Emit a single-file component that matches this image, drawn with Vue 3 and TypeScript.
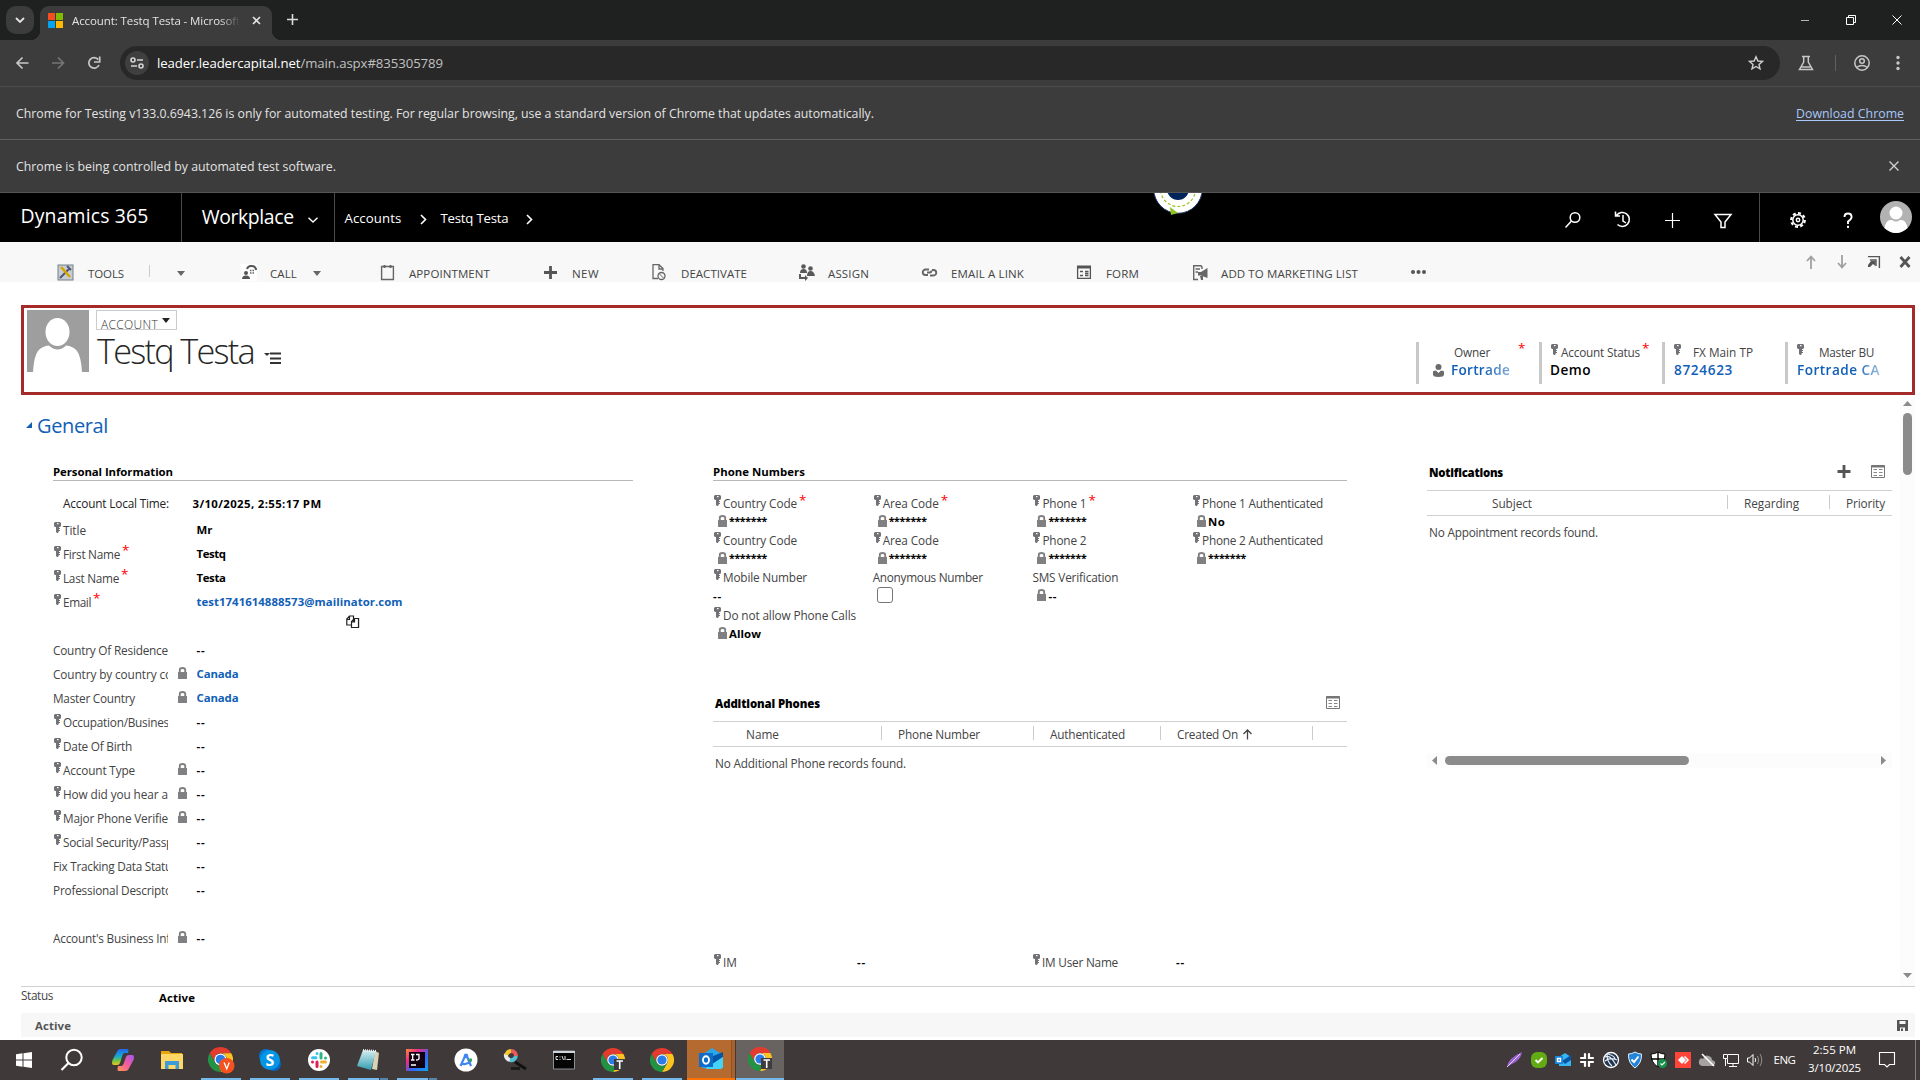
<script setup lang="ts">
interface Field { label: string; w: number; key?: boolean; req?: boolean; lock?: boolean; value?: string; vw?: number; link?: boolean }

// Spreads the letters so that a label takes the given width in pixels.
const vFit = (el: HTMLElement, binding: { value?: number }) => {
  if (!binding.value) return
  el.style.letterSpacing = '0px'
  const natural = el.getBoundingClientRect().width
  const count = (el.textContent ?? '').trim().length
  if (count) el.style.letterSpacing = (binding.value - natural) / count + 'px'
}

const fields: Field[] = [
  { label: 'Title', w: 23, key: true, value: 'Mr', vw: 16 },
  { label: 'First Name', w: 57, key: true, req: true, value: 'Testq', vw: 29 },
  { label: 'Last Name', w: 56, key: true, req: true, value: 'Testa', vw: 29 },
  { label: 'Email', w: 28, key: true, req: true, value: 'test1741614888573@mailinator.com', vw: 206, link: true },
  { label: '', w: 0 },
  { label: 'Country Of Residence', w: 115, value: '--', vw: 9 },
  { label: 'Country by country co', w: 119, lock: true, value: 'Canada', vw: 42, link: true },
  { label: 'Master Country', w: 82, lock: true, value: 'Canada', vw: 42, link: true },
  { label: 'Occupation/Busines', w: 106, key: true, value: '--', vw: 9 },
  { label: 'Date Of Birth', w: 69, key: true, value: '--', vw: 9 },
  { label: 'Account Type', w: 72, key: true, lock: true, value: '--', vw: 9 },
  { label: 'How did you hear ab', w: 112, key: true, lock: true, value: '--', vw: 9 },
  { label: 'Major Phone Verified', w: 112, key: true, lock: true, value: '--', vw: 9 },
  { label: 'Social Security/Passp', w: 110, key: true, value: '--', vw: 9 },
  { label: 'Fix Tracking Data Statu', w: 119, value: '--', vw: 9 },
  { label: 'Professional Descripto', w: 119, value: '--', vw: 9 },
  { label: '', w: 0 },
  { label: "Account's Business Inf", w: 117, lock: true, value: '--', vw: 9 },
]

const phones: (Field & { check?: boolean; empty?: boolean })[] = [
  { label: 'Country Code', w: 74, key: true, req: true, lock: true, value: '*******', vw: 38 },
  { label: 'Area Code', w: 56, key: true, req: true, lock: true, value: '*******', vw: 38 },
  { label: 'Phone 1', w: 44, key: true, req: true, lock: true, value: '*******', vw: 38 },
  { label: 'Phone 1 Authenticated', w: 121, key: true, lock: true, value: 'No', vw: 17 },
  { label: 'Country Code', w: 74, key: true, lock: true, value: '*******', vw: 38 },
  { label: 'Area Code', w: 56, key: true, lock: true, value: '*******', vw: 38 },
  { label: 'Phone 2', w: 44, key: true, lock: true, value: '*******', vw: 38 },
  { label: 'Phone 2 Authenticated', w: 121, key: true, lock: true, value: '*******', vw: 38 },
  { label: 'Mobile Number', w: 84, key: true, value: '--', vw: 9 },
  { label: 'Anonymous Number', w: 110, check: true },
  { label: 'SMS Verification', w: 86, lock: true, value: '--', vw: 9 },
  { label: '', w: 0, empty: true },
  { label: 'Do not allow Phone Calls', w: 133, key: true, lock: true, value: 'Allow', vw: 32 },
]

const summary = [
  { label: 'Owner', w: 36, value: 'Fortrade', vw: 59, cls: 'owner', link: true, req: true },
  { label: 'Account Status', w: 79, value: 'Demo', vw: 41, cls: 'state', key: true, req: true },
  { label: 'FX Main TP', w: 60, value: '8724623', vw: 59, cls: 'fx', key: true, link: true },
  { label: 'Master BU', w: 55, value: 'Fortrade CA', vw: 83, cls: 'bu', key: true, link: true },
]
</script>

<template>
  <div class="screen">
    <svg class="defs" width="0" height="0">
      <symbol id="key" viewBox="0 0 7 11"><path d="M1 0H6L7 1V4L6 5H5V6H6V7H5V8H6V9H5L4 11H3L2 10V5H1L0 4V1Z" fill="#717275" /><rect x="3" y="1" width="1.500" height="1.200" fill="#fff" /></symbol>
      <symbol id="lock" viewBox="0 0 9 12"><path d="M1.800 5.500V2.700Q1.800 1 4.500 1T7.200 2.700V5.500" fill="none" stroke="#808083" stroke-width="1.900" /><path d="M0 5H9V12H0Z" fill="#808083" /></symbol>
      <symbol id="list" viewBox="0 0 14 13"><path d="M.5.5H13.5V12.5H.5Z" fill="none" stroke="#777" /><path d="M0 1.500H14" stroke="#777" stroke-width="2" /><path d="M2.500 4.500H6M8 4.500H11.500M2.500 7.500H6M8 7.500H11.500M2.500 10.500H6M8 10.500H11.500" stroke="#888" /></symbol>
      <symbol id="chrome" viewBox="0 0 24 24">
        <path d="M1.6 6A12 12 0 0 1 22.4 6H12A6 6 0 0 0 6.8 15Z" fill="#e33b2e" /><path d="M22.4 6A12 12 0 0 1 12 24L17.2 15A6 6 0 0 0 12 6Z" fill="#fcc31e" /><path d="M12 24A12 12 0 0 1 1.6 6L6.8 15A6 6 0 0 0 17.2 15Z" fill="#229342" /><circle cx="12" cy="12" r="5.8" fill="#fff" /><circle cx="12" cy="12" r="4.6" fill="#2a7de9" />
      </symbol>
      <symbol id="tag" viewBox="0 0 24 24"><rect x="13" y="11" width="11" height="11" fill="#3c3c3e" /><path d="M15.500 13H22M18.700 13V21" stroke="#fff" stroke-width="1.600" /></symbol>
      <linearGradient id="cop1" x1="0" y1="0" x2="0" y2="1"><stop offset="0" stop-color="#2566e8" /><stop offset=".45" stop-color="#16a8d8" /><stop offset=".7" stop-color="#64c54a" /><stop offset="1" stop-color="#f3c51c" /></linearGradient>
      <linearGradient id="cop2" x1="1" y1="0" x2="0" y2="1"><stop offset="0" stop-color="#a656ee" /><stop offset=".5" stop-color="#f25c9b" /><stop offset="1" stop-color="#ff9952" /></linearGradient>
      <linearGradient id="ij" x1="0" y1="0" x2="1" y2="1"><stop offset="0" stop-color="#fc8b3d" /><stop offset=".3" stop-color="#ef2a85" /><stop offset=".6" stop-color="#3466f0" /><stop offset="1" stop-color="#0ba4f4" /></linearGradient>
      <linearGradient id="note" x1="0" y1="0" x2="0" y2="1"><stop offset="0" stop-color="#d7eff1" /><stop offset="1" stop-color="#329db0" /></linearGradient>
    </svg>

    <!-- browser tabs -->
    <header class="tabs">
      <div class="tabsearch"><svg width="10" height="6" viewBox="0 0 10 6"><path d="M1 1L5 5L9 1" fill="none" stroke="#e3e3e3" stroke-width="1.8" /></svg></div>
      <div class="tab">
        <svg width="15" height="15" viewBox="0 0 15 15"><path d="M0 0H7V7H0Z" fill="#f35022" /><path d="M8 0H15V7H8Z" fill="#80ba01" /><path d="M0 8H7V15H0Z" fill="#02a4ef" /><path d="M8 8H15V15H8Z" fill="#ffb901" /></svg>
        <span class="tabtitle"><span v-fit="168" class="t">Account: Testq Testa - Microsoft</span></span>
        <svg width="9" height="9" viewBox="0 0 9 9"><path d="M1 1L8 8M8 1L1 8" stroke="#e3e3e3" stroke-width="1.6" /></svg>
      </div>
      <svg class="newtab" width="11" height="11" viewBox="0 0 11 11"><path d="M5.5 0V11M0 5.5H11" stroke="#dcdcdc" stroke-width="1.6" /></svg>
      <div class="winctl">
        <svg width="46" height="40"><path d="M19 20.5H27" stroke="#b5b5b5" /></svg>
        <svg width="46" height="40"><path d="M18.500 17.500H25.500V24.500H18.500ZM20.500 17V15.500H27.500V22.500H26" fill="none" stroke="#fff" /></svg>
        <svg width="46" height="40"><path d="M18.500 15.500L27.500 24.500M27.500 15.500L18.500 24.500" stroke="#fff" /></svg>
      </div>
    </header>

    <div class="toolbar">
      <svg class="nav" width="36" height="46"><path d="M28.500 23H17.500M22.500 17.500L17 23L22.500 28.500" fill="none" stroke="#c7c7c7" stroke-width="1.7" /></svg>
      <svg class="nav" width="36" height="46"><path d="M16 23H27M22 17.500L27.500 23L22 28.500" fill="none" stroke="#757575" stroke-width="1.7" /></svg>
      <svg class="nav" width="36" height="46"><path d="M27 25A5.300 5.300 0 1 1 26.300 19.600" fill="none" stroke="#c7c7c7" stroke-width="1.700" /><path d="M27.700 16.500V22H22" fill="none" stroke="#c7c7c7" stroke-width="1.700" /></svg>
      <div class="omni">
        <div class="site"><svg width="14" height="12" viewBox="0 0 14 12"><g fill="none" stroke="#d5d5d5" stroke-width="1.6"><circle cx="3" cy="3" r="2" /><circle cx="11" cy="9" r="2" /><path d="M7 3H13M1 9H7" /></g></svg></div>
        <span v-fit="286" class="t url">leader.leadercapital.net<i>/main.aspx#835305789</i></span>
        <svg class="star" width="16" height="16" viewBox="0 0 16 16"><path d="M8 1.800L9.900 6L14.400 6.400L11 9.400L12 13.800L8 11.500L4 13.800L5 9.400L1.600 6.400L6.100 6Z" fill="none" stroke="#d0d0d0" stroke-width="1.400" /></svg>
      </div>
      <svg width="140" height="46"><g fill="none" stroke="#c7c7c7" stroke-width="1.5"><path d="M22 16.500H30M23.700 17V22L19.500 29.500H32.500L28.300 22V17M21.500 27H30.500" /><path d="M55.500 15V31" stroke="#606060" stroke-width="1" /><circle cx="82" cy="23" r="7.200" /><circle cx="82" cy="21" r="2.300" /><path d="M76.500 27.500Q82 23.500 87.500 27.500" /></g><g fill="#c7c7c7"><circle cx="118" cy="17.500" r="1.700" /><circle cx="118" cy="23" r="1.700" /><circle cx="118" cy="28.500" r="1.700" /></g></svg>
    </div>
    <div class="info"><span v-fit="858" class="t">Chrome for Testing v133.0.6943.126 is only for automated testing. For regular browsing, use a standard version of Chrome that updates automatically.</span><a v-fit="108" class="t">Download Chrome</a></div>
    <div class="info second"><span v-fit="320" class="t">Chrome is being controlled by automated test software.</span><svg width="20" height="12"><path d="M5.500 1.500L14.500 10.500M14.500 1.500L5.500 10.500" stroke="#cfcfcf" stroke-width="1.400" /></svg></div>

    <!-- application navigation -->
    <nav class="crm">
      <div class="brand"><span v-fit="128" class="t">Dynamics 365</span></div>
      <div class="area"><span v-fit="92" class="t">Workplace</span><svg width="10" height="6"><path d="M.500 .700L5 5L9.500 .700" fill="none" stroke="#fff" stroke-width="1.400" /></svg></div>
      <div class="crumbs">
        <span v-fit="57" class="t">Accounts</span><svg width="7" height="11"><path d="M1 1L5.500 5.500L1 10" fill="none" stroke="#fff" stroke-width="1.600" /></svg>
        <span v-fit="68" class="t">Testq Testa</span><svg width="7" height="11"><path d="M1 1L5.500 5.500L1 10" fill="none" stroke="#fff" stroke-width="1.600" /></svg>
      </div>
      <svg class="orb" width="52" height="49"><circle cx="26" cy="-4" r="24.300" fill="#fff" stroke="#173159" /><circle cx="26" cy="-4" r="11" fill="#00245a" /><circle cx="26" cy="-4" r="17.500" fill="none" stroke="#9bc121" stroke-width="1.200" stroke-dasharray="3 2" /><path d="M18 14L26 20L19 22Z" fill="#8fc31f" /></svg>
      <div class="navicons">
        <svg width="50" height="49"><circle cx="27" cy="24.500" r="4.800" /><path d="M23.500 28L17.500 34.500" /></svg>
        <svg width="50" height="49"><path d="M18.500 22.500A7 7 0 1 1 19.500 31.500M17.500 18.500V23H22M25 22V28L28 30" /></svg>
        <svg width="50" height="49"><path d="M24.500 20V35M17 27.500H32" stroke-width="1.200" /></svg>
        <svg width="37" height="49"><path d="M17 21.500H33L27 29V34.500H23V29Z" /></svg>
      </div>
      <div class="navicons sys">
        <svg width="50" height="49"><circle cx="25" cy="27" r="6.800" stroke-dasharray="3 2.300" stroke-width="2.200" /><circle cx="25" cy="27" r="5.200" /><circle cx="25" cy="27" r="1.700" /></svg>
        <svg width="50" height="49"><path d="M21.500 24Q21.500 20.500 25 20.500T28.600 24Q28.600 26 25 28.500V31M25 32.700V35" stroke-width="1.900" /></svg>
        <svg width="50" height="49"><circle cx="23" cy="24" r="16" fill="#b2b2b2" stroke="none" /><circle cx="23" cy="20" r="6.500" fill="#fff" stroke="none" /><path d="M11.500 35Q13 26 19 27Q23 30 27 27Q33 26 34.500 35Q23 45 11.500 35Z" fill="#fff" stroke="none" /></svg>
      </div>
    </nav>

    <!-- commands -->
    <div class="cmds">
      <svg width="17" height="17"><rect x="1" y="1" width="15" height="15" fill="#c7cdd1" stroke="#72808b" /><path d="M3 14L13 4M10 2L14 6" stroke="#557" stroke-width="2" /><path d="M4 3L13 13" stroke="#d5a400" stroke-width="2.500" /></svg>
      <span v-fit="36" class="t">TOOLS</span><i class="csep"></i><i class="tri"></i>
      <svg width="17" height="17"><path d="M0 0H16V17H0Z" fill="#fff" /><path d="M6 5Q7 1.500 11 2T15 6" fill="none" stroke="#555" stroke-width="2" /><path d="M9 6.500H14M9 9H14" stroke="#666" stroke-width="1.500" stroke-dasharray="1.500 1" /><circle cx="5" cy="9" r="2" fill="#555" /><path d="M1 15Q1 11.500 5 11.500T9 15Z" fill="#555" /></svg>
      <span v-fit="27" class="t">CALL</span><i class="tri"></i>
      <svg width="17" height="17"><path d="M2.600 2.500H14.400V15.500H2.600Z" fill="none" stroke="#666" stroke-width="1.400" /><path d="M5.500 1V4M11.500 1V4" stroke="#666" stroke-width="2" /></svg>
      <span v-fit="81" class="t">APPOINTMENT</span>
      <svg width="17" height="17"><path d="M8.500 2V15M2 8.500H15" stroke="#555" stroke-width="2.800" /></svg>
      <span v-fit="27" class="t">NEW</span>
      <svg width="17" height="17"><path d="M7 14.500H2V.700H8L12 4.500V7M8 1V5H12" fill="none" stroke="#666" stroke-width="1.300" /><circle cx="10.500" cy="12" r="3.500" fill="none" stroke="#666" stroke-width="1.300" /><path d="M8 9.500L13 14.500" stroke="#666" /></svg>
      <span v-fit="66" class="t">DEACTIVATE</span>
      <svg width="17" height="17" fill="#595959"><circle cx="5.500" cy="2.500" r="2.300" /><path d="M2 9Q2 5 5.500 5T9 9Z" /><circle cx="12.500" cy="4.500" r="2.300" /><path d="M9 12Q9 7 12.500 7T17 12Z" /><path d="M3 10V13H7V11L10 14L7 17V15H1V10Z" /></svg>
      <span v-fit="41" class="t">ASSIGN</span>
      <svg width="17" height="17" fill="none" stroke="#666" stroke-width="1.900"><path d="M8 5.500H4.500A2.500 2.500 0 0 0 4.500 11H7M6 8.500H8.500Q10.500 8.500 10.500 6.500M9 11.500H12.500A2.500 2.500 0 0 0 12.500 6H11" /></svg>
      <span v-fit="73" class="t">EMAIL A LINK</span>
      <svg width="17" height="17"><path d="M1.600 2.600H14.400V14.400H1.600Z" fill="none" stroke="#555" stroke-width="1.300" /><path d="M1 3H15" stroke="#555" stroke-width="3" /><path d="M4 7.500H7M4 11.500H7M9 7.500H12.500M9 9.500H12.500M9 11.500H12.500" stroke="#555" stroke-width="1.300" /></svg>
      <span v-fit="33" class="t">FORM</span>
      <svg width="17" height="17"><path d="M6 15.500H1.700V1.700H9L10 3V5M3.500 5H8M3.500 8H6" fill="none" stroke="#666" stroke-width="1.400" /><path d="M6 8H9L15.500 4V14L9 11.500H6ZM8 12H11V16H9Z" fill="#666" /></svg>
      <span v-fit="137" class="t">ADD TO MARKETING LIST</span>
      <svg width="17" height="17" fill="#555"><circle cx="2" cy="8" r="2" /><circle cx="7.500" cy="8" r="2" /><circle cx="13" cy="8" r="2" /></svg>
      <svg class="paging" width="116" height="18" fill="none"><path d="M7 17V4M3 9L7 4.500L11 9M38 3V16M34 11L38 15.500L42 11" stroke="#a0a0a0" stroke-width="1.800" /><path d="M64 4.600H75.400V16M66 8H72V14" stroke="#555" stroke-width="1.400" /><path d="M67 9H71.500V14L69 12L66 15H64V13Z" fill="#555" /><path d="M96.500 5L105.500 15M105.500 5L96.500 15" stroke="#555" stroke-width="2.800" /></svg>
    </div>

    <!-- record header -->
    <section class="record">
      <svg class="face" width="62" height="62"><path d="M0 0H62V62H0Z" fill="#9e9e9e" /><ellipse cx="30.500" cy="22" rx="12" ry="14" fill="#fff" /><path d="M6 62Q7 46 11 41Q15 36 22 35.500Q26 39.500 30.500 39.500T39 35.500Q46 36 50 41Q54 46 55 62Z" fill="#fff" /></svg>
      <div class="who">
        <div class="entity"><span v-fit="57" class="t">ACCOUNT</span><i class="tri dark"></i></div>
        <div class="name"><span v-fit="157" class="t">Testq Testa</span><svg width="18" height="12"><path d="M0 1H6L3 4Z" fill="#333" /><path d="M6 1.500H17M6 6.500H17M6 11H17" stroke="#333" stroke-width="2" /></svg></div>
      </div>
      <div class="summary">
        <div v-for="s in summary" :key="s.label" class="sum" :class="s.cls">
          <div class="sl"><svg v-if="s.key" class="skey" width="7" height="11"><use href="#key" /></svg><span v-fit="s.w" class="t">{{ s.label }}</span><b v-if="s.req" class="req">*</b></div>
          <div class="sv" :class="{ link: s.link }"><svg v-if="s.cls === 'owner'" width="11" height="13" fill="#6b6b6b"><circle cx="5.500" cy="3" r="3" /><path d="M0 8Q0 6.500 3 6.500L5.500 9L8 6.500Q11 6.500 11 8V10.500Q11 13 5.500 13T0 10.500Z" /></svg><span v-fit="s.vw" class="t">{{ s.value }}</span></div>
        </div>
      </div>
    </section>

    <main class="body">
      <div class="content">
        <h2><svg width="6" height="6"><path d="M6 0V6H0Z" fill="#1160b7" /></svg><span v-fit="71" class="t">General</span></h2>
        <div class="cols">
          <section class="personal">
            <h3 class="ruled"><span v-fit="120" class="t">Personal Information</span></h3>
            <div class="local"><span v-fit="106" class="t">Account Local Time:</span><b v-fit="129" class="t">3/10/2025, 2:55:17 PM</b></div>
            <div v-for="(f, i) in fields" :key="i" class="frow">
              <div class="flabel"><svg v-if="f.key" class="fkey" width="7" height="11"><use href="#key" /></svg><span v-if="f.label" v-fit="f.w" class="t">{{ f.label }}</span><b v-if="f.req" class="req">*</b></div>
              <div class="flock"><svg v-if="f.lock" width="9" height="12"><use href="#lock" /></svg></div>
              <svg v-if="i === 4" class="copy" width="14" height="14" fill="#fff" stroke="#222" stroke-width="1.200"><path d="M6.500 3.500H12.500V12.500H6.500Z" /><path d="M.800 4L3.500 1H7.500V10H.800ZM1 4.500H3.500V1" /><path d="M5.500 12.500V6.500L8.500 3.500H12.500V12.500ZM5.500 7H8.500V3.500" /></svg>
              <div v-else-if="f.value" class="fval" :class="{ link: f.link }"><span v-fit="f.vw" class="t">{{ f.value }}</span></div>
            </div>
          </section>

          <section class="phonecol">
            <h3 class="ruled"><span v-fit="92" class="t">Phone Numbers</span></h3>
            <div class="phones">
              <div v-for="(p, i) in phones" :key="i" class="phone">
                <template v-if="!p.empty">
                  <div class="plabel"><svg v-if="p.key" class="pkey" width="7" height="11"><use href="#key" /></svg><span v-fit="p.w" class="t">{{ p.label }}</span><b v-if="p.req" class="req">*</b></div>
                  <div class="pval"><i v-if="p.check" class="check"></i><svg v-if="p.lock" width="9" height="12"><use href="#lock" /></svg><span v-if="p.value" v-fit="p.vw" class="t" :class="{ mask: p.value[0] === '*' }">{{ p.value }}</span></div>
                </template>
              </div>
            </div>
            <div class="gridhead"><b v-fit="105" class="t">Additional Phones</b><svg width="14" height="13"><use href="#list" /></svg></div>
            <div class="thead add"><span><i v-fit="33" class="t">Name</i></span><span><i v-fit="82" class="t">Phone Number</i></span><span><i v-fit="75" class="t">Authenticated</i></span><span><i v-fit="61" class="t">Created On</i><svg width="11" height="11"><path d="M5.500 10.500V1M1.500 5L5.500 1L9.500 5" fill="none" stroke="#444" stroke-width="1.300" /></svg></span><span></span></div>
            <p><span v-fit="191" class="t">No Additional Phone records found.</span></p>
            <div class="im"><svg width="7" height="11"><use href="#key" /></svg><span v-fit="14" class="t">IM</span><b v-fit="9" class="t">--</b><svg width="7" height="11"><use href="#key" /></svg><span v-fit="76" class="t">IM User Name</span><b v-fit="9" class="t">--</b></div>
          </section>

          <section class="notes">
            <div class="gridhead"><b v-fit="74" class="t">Notifications</b><svg class="plus" width="14" height="13"><path d="M7 0V13M.500 6.500H13.500" stroke="#555" stroke-width="2.800" /></svg><svg width="14" height="13"><use href="#list" /></svg></div>
            <div class="thead note"><span><i v-fit="40" class="t">Subject</i></span><span><i v-fit="55" class="t">Regarding</i></span><span><i v-fit="39" class="t">Priority</i></span></div>
            <p><span v-fit="169" class="t">No Appointment records found.</span></p>
            <div class="hscroll"><svg width="5" height="9"><path d="M5 0V9L0 4.500Z" fill="#8b8b8b" /></svg><i></i><svg width="5" height="9"><path d="M0 0V9L5 4.500Z" fill="#8b8b8b" /></svg></div>
          </section>
        </div>
      </div>
      <div class="vscroll"><svg width="9" height="5"><path d="M0 5H9L4.500 0Z" fill="#8b8b8b" /></svg><i></i><svg width="9" height="5"><path d="M0 0H9L4.500 5Z" fill="#8b8b8b" /></svg></div>
    </main>

    <div class="status"><span v-fit="32" class="t">Status</span><b v-fit="36" class="t">Active</b></div>
    <div class="strip"><b v-fit="36" class="t">Active</b><svg width="11" height="11"><path d="M0 0H11V11H0Z" fill="#555" /><path d="M2.500 1H8.500V4H2.500ZM3 7.500H8V11H3Z" fill="#f7f7f7" /><path d="M4 8.500H6V11H4Z" fill="#555" /></svg></div>

    <!-- taskbar -->
    <footer class="taskbar">
      <div class="cell start"><svg width="16" height="16" fill="#fff"><path d="M0 2.200L6.500 1.300V7.500H0ZM7.500 1.200L16 0V7.500H7.500ZM0 8.500H6.500V14.700L0 13.800ZM7.500 8.500H16V16L7.500 14.800Z" /></svg></div>
      <div class="cell find"><svg width="24" height="24"><circle cx="14" cy="9.500" r="7.700" fill="none" stroke="#fff" stroke-width="2" /><path d="M8.500 15L1.500 22" stroke="#fff" stroke-width="2.200" /></svg></div>
      <div class="cell"><svg width="24" height="24" viewBox="0 0 24 24"><path d="M7 2Q8 1 10 1H16Q18 1 17.500 3L17 5H14Q12 5 11.500 7L9 15Q8.500 17 6 17H3Q0 17 1.500 12Z" fill="url(#cop1)" /><path d="M17 22Q16 23 14 23H8Q6 23 6.500 21L7 18H10Q12 18 12.500 16L15 9Q15.500 7 18 7H21Q24 7 22.500 12Z" fill="url(#cop2)" /></svg></div>
      <div class="cell"><svg width="24" height="24" viewBox="0 0 24 24"><path d="M1 3H9L11 5H22V9H1Z" fill="#e7a70c" /><path d="M1 6H23V21H1Z" fill="#ffd767" /><path d="M5 13H19V21H15.500V17H8.500V21H5Z" fill="#3d9bdc" /></svg></div>
      <div class="cell run"><svg width="28" height="28" viewBox="-1 -1 27 27"><use href="#chrome" width="24" height="24" /><circle cx="18" cy="18" r="7.500" fill="#f4511e" /><path d="M15.500 15L18 21L20.500 15" fill="none" stroke="#fff" stroke-width="1.300" /></svg></div>
      <div class="cell run"><svg width="24" height="24" viewBox="0 0 24 24"><rect x="1" y="1" width="14" height="14" rx="7" fill="#0078d4" /><rect x="9" y="9" width="14" height="14" rx="7" fill="#0864c5" /><circle cx="12" cy="12" r="10" fill="#0595e5" /></svg><b>S</b></div>
      <div class="cell run"><svg width="24" height="24" viewBox="0 0 24 24"><circle cx="12" cy="12" r="11" fill="#fff" /><g fill="none" stroke-width="3" stroke-linecap="round"><path d="M5.500 9.800H9M10 5.500V5.600" stroke="#36c5f0" /><path d="M14 5.500V10M18.500 10V9.900" stroke="#2eb67d" /><path d="M14.500 14H18.500M14 18.500V18.400" stroke="#ecb22e" /><path d="M10 14V18.500M5.500 14V14.100" stroke="#e01e5a" /></g></svg></div>
      <div class="cell run multi"><svg width="24" height="24" viewBox="0 0 24 24"><path d="M19 3L23 5L21 22L16 21Z" fill="#d9d2b4" /><path d="M7 2L20 3L15 22L1 18Z" fill="url(#note)" /><path d="M7 2L20 3" stroke="#eee" stroke-width="2" stroke-dasharray="1 1" /></svg></div>
      <div class="cell run multi"><svg width="24" height="24" viewBox="0 0 24 24"><rect x="1" y="1" width="22" height="22" fill="url(#ij)" /><path d="M4 4H20V20H4Z" fill="#120010" /><path d="M6 6.500H9.500M7.700 6.500V12M6 12H9.500M11 6.500H14V10.500Q14 12 11 12M6 17H11" fill="none" stroke="#fff" stroke-width="1.300" /></svg></div>
      <div class="cell"><svg width="24" height="24" viewBox="0 0 24 24"><circle cx="12" cy="12" r="11.500" fill="#fff" /><path d="M12 6L6.500 18M12 6L17 18M7 15Q12 18 17 13" fill="none" stroke="#4285f4" stroke-width="2.200" /><circle cx="12" cy="8" r="2.300" fill="#4285f4" /><circle cx="16.500" cy="12" r="1.700" fill="#34a853" /></svg></div>
      <div class="cell"><svg width="24" height="24" viewBox="0 0 24 24"><path d="M12 14L23 21" stroke="#111" stroke-width="3" /><path d="M8 19H17V22H8Z" fill="#1b1b1b" /><g fill="none" stroke-width="4"><path d="M7 12A5 5 0 0 1 3 6" stroke="#e9e9e9" /><path d="M3.500 7A5 5 0 0 1 8 3" stroke="#f7c52e" /><path d="M8 3A5 5 0 0 1 13 8" stroke="#ed5a5c" /><path d="M13 8A5 5 0 0 1 7 12" stroke="#56bfd6" /></g></svg></div>
      <div class="cell"><svg width="24" height="24" viewBox="0 0 24 24"><path d="M1.500 3H22.500V21H1.500Z" fill="#050505" stroke="#8b9197" /><path d="M1 4H23" stroke="#cfd5da" stroke-width="2" /><path d="M6 8.500H4V11.500H6M8 8.500V9.500M8 11V12M10 8L11.500 12M13 8V12M14.500 11.500H19" fill="none" stroke="#ddd" /></svg></div>
      <div class="cell run"><svg width="24" height="24" viewBox="0 0 24 24"><use href="#chrome" width="24" height="24" /><use href="#tag" width="24" height="24" /></svg></div>
      <div class="cell run"><svg width="24" height="24"><use href="#chrome" /></svg></div>
      <div class="cell outlook"><svg width="26" height="24" viewBox="0 0 26 24"><path d="M4 8L14 1L25 8V21H4Z" fill="#28a8ea" /><path d="M8 12L25 5V10L12 19Z" fill="#0357a5" /><path d="M8 21L25 10V20L23 22H8Z" fill="#43d3f8" /><path d="M1 6H15V20H1Z" fill="#0f6cc9" /><ellipse cx="8" cy="13" rx="3" ry="3.700" fill="none" stroke="#fff" stroke-width="1.900" /></svg></div>
      <div class="cell active"><svg width="24" height="24" viewBox="0 0 24 24"><use href="#chrome" width="24" height="24" /><use href="#tag" width="24" height="24" /></svg></div>
      <div class="tray">
        <svg><path d="M4 19Q5 10 19 4Q18 12 9 16Z" fill="#9b64d0" /><path d="M4 19L17 6" stroke="#e6cfff" /></svg>
        <svg><rect x="4" y="4" width="16" height="16" rx="6" fill="#62ab13" /><path d="M8.500 12L11 14.500L15.500 10" fill="none" stroke="#fff" stroke-width="1.900" /></svg>
        <svg><path d="M8 9L14 5L20 9V18H8Z" fill="#37b6f5" /><path d="M11 13L20 7V12L14 16Z" fill="#0754a5" /><path d="M4 8H12V16H4Z" fill="#1683dc" /><path d="M6.500 10.500H9.500V13.500H6.500Z" fill="none" stroke="#fff" stroke-width="1.400" /></svg>
        <svg><path d="M10 6V10H6M14 6V10H18M10 18V14H6M14 18V14H18" fill="none" stroke="#fff" stroke-width="2.200" stroke-linecap="round" /></svg>
        <svg><circle cx="12" cy="12" r="7.500" fill="#24364f" stroke="#fff" stroke-width="1.300" /><path d="M6 9Q11 6 17 17M9 6Q16 8 16 11M6 13Q11 9 18 12M8 6Q8 14 13 18" fill="none" stroke="#e5edf7" stroke-width="1.200" /></svg>
        <svg><path d="M12 4Q15 6 18.500 6Q19 15 12 20Q5 15 5.500 6Q9 6 12 4Z" fill="#2384d8" stroke="#e4f0fa" /><path d="M8.500 11.500L11 14L15.500 8.500" fill="none" stroke="#fff" stroke-width="1.900" /></svg>
        <svg><path d="M11 4Q14 6 18 6Q18 15 11 19Q4 15 4 6Q8 6 11 4Z" fill="#fff" stroke="#000" /><path d="M11 4V18M4 11H18" stroke="#000" stroke-width="1.400" /><circle cx="15.500" cy="15.500" r="4.500" fill="#149348" /><path d="M13.500 15.500L15 17L18 14" fill="none" stroke="#fff" stroke-width="1.200" /></svg>
        <svg><path d="M4 4H20V20H4Z" fill="#ff4438" /><path d="M7 12L11 8L15 12L11 16Z" fill="#fff" /><path d="M13.500 8.500L17 12L13.500 15.500" fill="none" stroke="#fff" stroke-width="1.500" /></svg>
        <svg><path d="M7 18Q3 17 4 13T8 11Q10 6 14 8Q17 9 17 12Q21 13 20 16L18 18Z" fill="#a5a2a1" /><path d="M7 6L19 18" stroke="#fff" stroke-width="1.600" /></svg>
        <svg><path d="M9 6.500H19.500V15.500H8.500V11M14 16V18.500M10 18.500H18M4.500 6.500H8.500V10.500H4.500ZM6.500 11V18" fill="none" stroke="#fff" /></svg>
        <svg><path d="M4.500 10H6.500L10 6.500V17.500L6.500 14H4.500Z" fill="none" stroke="#fff" /><path d="M12 10Q13.500 12 12 14" fill="none" stroke="#fff" /><path d="M14.500 8Q17 12 14.500 16M17 6Q20.500 12 17 18" fill="none" stroke="#948f8e" /></svg>
      </div>
      <span v-fit="22" class="t eng">ENG</span>
      <div class="clock"><span v-fit="43" class="t">2:55 PM</span><span v-fit="53" class="t">3/10/2025</span></div>
      <svg class="bell" width="18" height="18"><path d="M1.500 1.500H16.500V13.500H11.500L9 16L6.500 13.500H1.500Z" fill="none" stroke="#fff" stroke-width="1.100" /></svg>
      <i class="edge"></i>
    </footer>
  </div>
</template>

<style>
body { margin: 0; overflow: hidden; background: #fff; }
</style>

<style scoped>
* { box-sizing: border-box; }
.screen { width: 1920px; height: 1080px; overflow: hidden; display: flex; flex-direction: column; font: 11.8px "Open Sans", "Noto Sans", sans-serif; color: #444; background: #fff; }
.defs { position: absolute; }
svg { display: block; flex: none; }
i { font-style: normal; }
.t { display: inline-block; white-space: pre; flex: none; }
.link { color: #1160b7 !important; }
.req { color: #f00; font: 400 13.5px/10px "Open Sans", sans-serif; align-self: flex-start; margin: 1px 0 0 2px; }

.tabs { height: 40px; flex: none; background: #1f2120; display: flex; }
.tabsearch { width: 28px; height: 28px; margin: 6px 6px 0; border-radius: 10px; background: #3c3c3c; display: flex; align-items: center; justify-content: center; }
.tab { width: 232px; height: 34px; margin-top: 6px; border-radius: 9px 9px 0 0; background: #3c3c3c; color: #e3e3e3; display: flex; align-items: center; padding: 0 11px 5px 8px; position: relative; }
.tab::before, .tab::after { content: ""; position: absolute; bottom: 0; width: 9px; height: 9px; }
.tab::before { left: -9px; background: radial-gradient(circle at 0 0, #1f2120 9px, #3c3c3c 9px); }
.tab::after { right: -9px; background: radial-gradient(circle at 100% 0, #1f2120 9px, #3c3c3c 9px); }
.tabtitle { margin-left: 9px; width: 168px; margin-right: 12px; overflow: hidden; font-size: 11.5px; line-height: 20px; mask-image: linear-gradient(90deg, #000 148px, transparent 168px); }
.newtab { margin: 14px 0 0 14.5px; }
.winctl { display: flex; margin-left: auto; }
.toolbar { height: 46px; flex: none; background: #3c3c3c; display: flex; }
.toolbar .nav:nth-child(3) { margin-right: 12px; }
.omni { width: 1660px; height: 34px; margin-top: 6px; border-radius: 17px; background: #282828; display: flex; align-items: center; padding: 0 16px 0 5px; }
.site { width: 24px; height: 24px; border-radius: 50%; background: #3f3f3f; display: flex; align-items: center; justify-content: center; margin-right: 8px; }
.url { color: #fff; font-size: 13.2px; }
.url i { color: #c0c0c0; }
.star { margin-left: auto; }
.info { height: 53px; flex: none; border-top: 1px solid #4b4b4b; background: #3c3c3c; color: #e3e3e3; font-size: 12.3px; display: flex; align-items: center; justify-content: space-between; padding: 0 16px; }
.info a { color: #a8c7fa; text-decoration: underline; text-underline-offset: 2px; }
.info.second { height: 54px; border-top-color: #606060; border-bottom: 1px solid #555; }

.crm { height: 49px; flex: none; background: #000; color: #fff; display: flex; }
.brand { width: 182px; border-right: 1px solid #4a4a4a; padding-left: 20.5px; font-size: 19.4px; line-height: 46px; }
.area { width: 154px; border-right: 1px solid #4a4a4a; padding-left: 20px; font-size: 19.4px; line-height: 47px; display: flex; }
.area svg { margin: 24px 0 0 14px; }
.crumbs { display: grid; grid-template-columns: 76px 20px 86px 11px; padding-left: 9px; font-size: 13.2px; line-height: 50px; justify-items: start; }
.crumbs svg { margin-top: 21px; }
.orb { margin-left: 615px; }
.navicons { display: flex; margin-left: 344px; width: 212px; border-right: 1px solid #4a4a4a; }
.navicons svg { fill: none; stroke: #fff; stroke-width: 1.5; }
.navicons.sys { margin-left: 13px; width: 147px; border: 0; }

.cmds { height: 40px; flex: none; background: #f8f8f8; display: grid; justify-items: start; padding-left: 57px; padding-top: 22px; grid-template-columns: 31px 61px 28px 64px 29px 43px 66px 30px 133px 30px 79px 30px 117px 30px 93px 30px 125px 30px 86px 29px 190px 1fr 116px; line-height: 20px; font-size: 11.5px; color: #444; overflow: hidden; }
.cmds > .paging { grid-column: 23; margin-top: -12px; }
.csep { width: 1px; height: 12px; background: #ccc; margin-top: 1px; }
.tri { width: 0; height: 0; border: 4px solid transparent; border-top: 5px solid #666; border-bottom: 0; margin: 7px 0 0 0; }
.tri.dark { border-top-color: #222; }

.record { width: 1894px; height: 90px; flex: none; margin: 23px 0 0 21px; border: 3px solid #a52a2a; display: flex; padding: 2px 0 0 3px; }
.who { margin-left: 7px; }
.entity { width: 81px; height: 20px; border: 1px solid #ccc; display: flex; padding-left: 4px; overflow: hidden; font-size: 12px; line-height: 27px; color: #333; font-weight: 300; }
.entity .tri { margin: 7px 0 0 4px; }
.name { display: flex; margin-left: 1px; font-size: 34.3px; font-weight: 300; color: #262626; line-height: 41px; }
.name svg { margin: 22px 0 0 10px; }
.summary { margin: 32px 0 0 auto; display: flex; height: 42px; padding-right: 4px; }
.sum { width: 123px; border-left: 3px solid #c8c8c8; }
.sl { display: flex; height: 20px; line-height: 21px; padding-left: 9px; }
.skey { margin-top: 2px; }
.owner .sl { padding-left: 35px; }
.owner .req { margin-left: 28px; }
.state .sl .t { margin-left: 3px; }
.fx .sl .t { margin-left: 12px; }
.bu .sl .t { margin-left: 15px; }
.sv { padding-left: 9px; font-size: 13.6px; line-height: 16px; height: 20px; color: #000; font-weight: 600; display: flex; }
.state .sv { padding-left: 8px; }
.owner .sv { padding-left: 14px; line-height: 15px; }
.owner .sv svg { margin: 2px 7px 0 0; }
.owner .sv .t { mask-image: linear-gradient(90deg, #000 50%, #0008); }
.bu .sv .t { mask-image: linear-gradient(90deg, #000 70%, #0006); }

.body { height: 591px; flex: none; display: flex; overflow: hidden; }
.content { width: 1900px; padding-top: 16px; }
h2 { margin: 0 0 22px; height: 30px; padding-left: 26px; display: flex; color: #1160b7; font-size: 20px; font-weight: 400; line-height: 30px; }
h2 svg { margin: 11px 5px 0 0; }
.cols { display: flex; padding-left: 53px; gap: 80px; }
h3 { margin: 0; font-size: 11.4px; font-weight: 700; color: #000; line-height: 18px; }
h3.ruled { height: 18px; border-bottom: 1px solid #b8b8b8; }
.personal { width: 580px; }
.local { display: grid; grid-template-columns: 129.5px 1fr; padding-left: 10px; margin-top: 10px; height: 27px; line-height: 25px; color: #222; justify-items: start; }
.local b { color: #000; font-size: 11.4px; font-weight: 700; }
.frow { display: grid; grid-template-columns: 115px 28.5px 1fr; height: 24px; line-height: 25px; }
.flabel { display: flex; overflow: hidden; }
.flabel .fkey { margin: 4px 2px 0 1px; }
.flabel .req { margin-top: 3px; }
.flock { padding: 5px 0 0 10px; }
.fval { line-height: 23px; font-size: 11.4px; font-weight: 700; color: #000; }
.copy { margin: 1px 0 0 149px; }
.phonecol { width: 634px; }
.phones { display: grid; grid-template-columns: repeat(4, 159.7px); grid-template-rows: 37px 37px 38px 37px; margin-top: 13px; height: 149px; }
.plabel { display: flex; height: 19px; line-height: 19.500px; white-space: nowrap; }
.pkey { margin: 1px 2px 0 1px; }
.plabel .req { margin-top: 1px; }
.pval { display: flex; height: 18px; line-height: 17px; color: #000; font-size: 11.4px; font-weight: 700; }
.pval .mask { font-size: 10.5px; line-height: 16px; }
.pval svg { margin: 2px 2px 0 5px; }
.check { width: 16px; height: 16px; border: 1px solid #767676; border-radius: 3px; margin: 0 0 0 4px; }
.gridhead { display: flex; height: 27px; line-height: 19px; padding: 0 7px 0 2px; color: #000; font-size: 11.4px; font-weight: 700; justify-content: space-between; }
.phonecol .gridhead { margin-top: 51px; }
.gridhead svg { margin-top: 2px; }
.thead { display: grid; height: 26px; border: 1px solid #d0d0d0; border-width: 1px 0; line-height: 25px; }
.thead span { display: flex; padding-left: 17px; background: linear-gradient(#ccc, #ccc) 0 4px / 1px 14px no-repeat; }
.thead span:first-child { background: none; padding-left: 33px; }
.thead.add { grid-template-columns: 168px 152px 127px 152px 1fr; }
.thead.add svg { margin: 7px 0 0 4px; }
.thead.note { grid-template-columns: 300px 102px 1fr; }
.thead.note span:first-child { padding-left: 65px; }
p { margin: 4px 0 0 2px; line-height: 25px; height: 25px; }
.im { margin-top: 174px; display: grid; grid-template-columns: 9px 134px 176px 9px 134px 1fr; padding-left: 1px; line-height: 25px; justify-items: start; }
.im svg { margin-top: 4px; }
.im b { color: #000; line-height: 23px; font-size: 11.4px; }
.notes { width: 465px; }
.notes .plus { margin-left: auto; margin-right: 20px; }
.hscroll { margin-top: 208px; height: 15px; background: #fcfcfc; display: flex; align-items: center; padding: 0 6px 0 5px; }
.hscroll i { width: 244px; height: 9px; border-radius: 5px; background: #8b8b8b; margin: 0 auto 0 8px; }
.vscroll { width: 15px; background: #fcfcfc; display: flex; flex-direction: column; align-items: center; padding: 6px 0 8px; }
.vscroll i { width: 9px; height: 62px; border-radius: 5px; background: #8b8b8b; margin: 7px 0 auto; }

.status { height: 27px; flex: none; width: 1894px; margin-left: 21px; border-top: 1px solid #d0d0d0; display: grid; grid-template-columns: 138px 1fr; justify-items: start; line-height: 17px; }
.status b { color: #000; line-height: 21px; font-size: 11.4px; font-weight: 700; }
.strip { height: 24px; flex: none; width: 1894px; margin: 0 0 3px 21px; background: #f7f7f7; display: flex; justify-content: space-between; padding: 0 7px 0 14px; line-height: 25px; color: #555; }
.strip b { font-size: 11.4px; font-weight: 700; }
.strip svg { margin-top: 7px; }

.taskbar { height: 40px; flex: none; background: #3f3a39; display: flex; color: #fff; font-size: 11.5px; }
.cell { width: 48px; height: 40px; margin-right: 1px; flex: none; display: flex; align-items: center; justify-content: center; position: relative; }
.cell.start { margin-right: 0; }
.cell.find { margin-right: 3px; }
.cell.run::after { content: ""; position: absolute; left: 4px; right: 4px; bottom: 0; height: 2px; background: #76b9ed; }
.cell.multi::after { background: linear-gradient(90deg, #76b9ed 31px, #3f3a39 31px, #3f3a39 32px, #5585ac 32px); }
.cell b { position: absolute; font-size: 16px; line-height: 20px; }
.cell.outlook { background: linear-gradient(90deg, #b56a30 44px, #8f5122 44px, #8f5122 45px, #a9622c 45px); border-bottom: 2px solid #ff7200; }
.cell.active { background: #686361; border-bottom: 2px solid #76b9ed; }
.tray { display: flex; margin-left: 718px; padding-top: 8px; }
.tray svg { width: 24px; height: 24px; }
.eng { margin-left: 6.5px; line-height: 39px; }
.clock { width: 78px; display: flex; flex-direction: column; align-items: center; line-height: 18px; padding-top: 1px; }
.bell { margin-left: 4px; margin-top: 11px; }
.edge { width: 1px; background: #86817f; margin-left: 19px; }
</style>
